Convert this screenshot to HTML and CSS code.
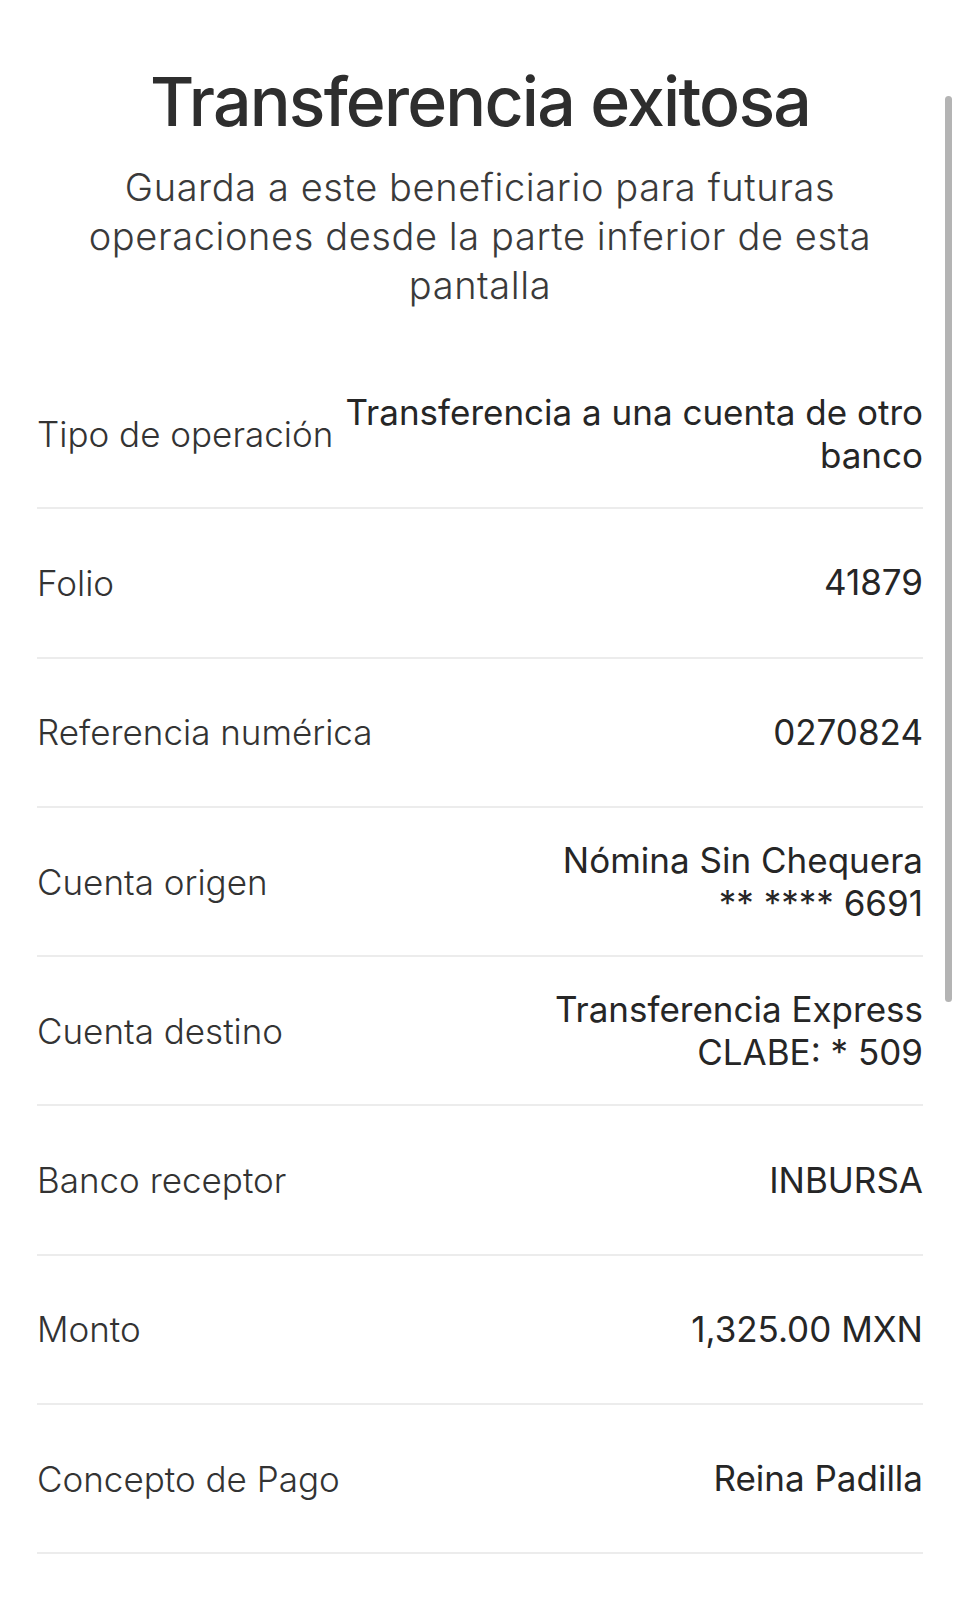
FILE: index.html
```html
<!DOCTYPE html>
<html lang="es">
<head>
    <meta charset="UTF-8">
    <meta name="viewport" content="width=device-width, initial-scale=1.0">
    <title>Transferencia exitosa</title>
    <link rel="stylesheet" href="styles.css">
</head>
<body>
    <div class="screen">
        <header class="header">
            <h1 class="title">Transferencia exitosa</h1>
            <p class="subtitle">Guarda a este beneficiario para futuras operaciones desde la parte inferior de esta pantalla</p>
        </header>

        <div class="details">
            <div class="row">
                <span class="label">Tipo de operación</span>
                <span class="value">Transferencia a una cuenta de otro banco</span>
            </div>
            <div class="row">
                <span class="label">Folio</span>
                <span class="value">41879</span>
            </div>
            <div class="row">
                <span class="label">Referencia numérica</span>
                <span class="value">0270824</span>
            </div>
            <div class="row">
                <span class="label">Cuenta origen</span>
                <span class="value">
                    <span class="line">Nómina Sin Chequera</span>
                    <span class="line">** **** 6691</span>
                </span>
            </div>
            <div class="row">
                <span class="label">Cuenta destino</span>
                <span class="value">
                    <span class="line">Transferencia Express</span>
                    <span class="line">CLABE: * 509</span>
                </span>
            </div>
            <div class="row">
                <span class="label">Banco receptor</span>
                <span class="value">INBURSA</span>
            </div>
            <div class="row">
                <span class="label">Monto</span>
                <span class="value">1,325.00 MXN</span>
            </div>
            <div class="row">
                <span class="label">Concepto de Pago</span>
                <span class="value">Reina Padilla</span>
            </div>
        </div>

        <div class="scrollbar"></div>
    </div>
</body>
</html>
```

FILE: styles.css
```css
html, body {
    margin: 0;
    padding: 0;
    background-color: #fff;
}
body {
    font-family: Inter, "Noto Sans", sans-serif;
    color: #333;
}
.screen {
    position: relative;
    min-height: 1600px;
    padding: 0 37px;
}
.header {
    padding-top: 59px;
    text-align: center;
}
.title {
    margin: 0;
    font-size: 68px;
    font-weight: 500;
    line-height: 84px;
    letter-spacing: -1.8px;
    color: #2e2e2e;
}
.subtitle {
    margin: 20px 10px 0;
    font-size: 38px;
    font-weight: 300;
    line-height: 49px;
    letter-spacing: 0.6px;
    color: #3a3a3a;
}
.details {
    margin-top: 50px;
}
.row {
    display: flex;
    justify-content: space-between;
    align-items: center;
    gap: 8px;
    box-sizing: border-box;
    height: 149.3px;
    border-bottom: 2px solid #ececec;
}
.label {
    flex-shrink: 0;
    font-size: 35px;
    font-weight: 300;
    color: #333;
}
.value {
    text-align: right;
    font-size: 35px;
    font-weight: 400;
    line-height: 43px;
    color: #262626;
}
.line {
    display: block;
}
.scrollbar {
    position: absolute;
    top: 96px;
    right: 8px;
    width: 7px;
    height: 906px;
    border-radius: 4px;
    background-color: #b4b4b4;
}
```
